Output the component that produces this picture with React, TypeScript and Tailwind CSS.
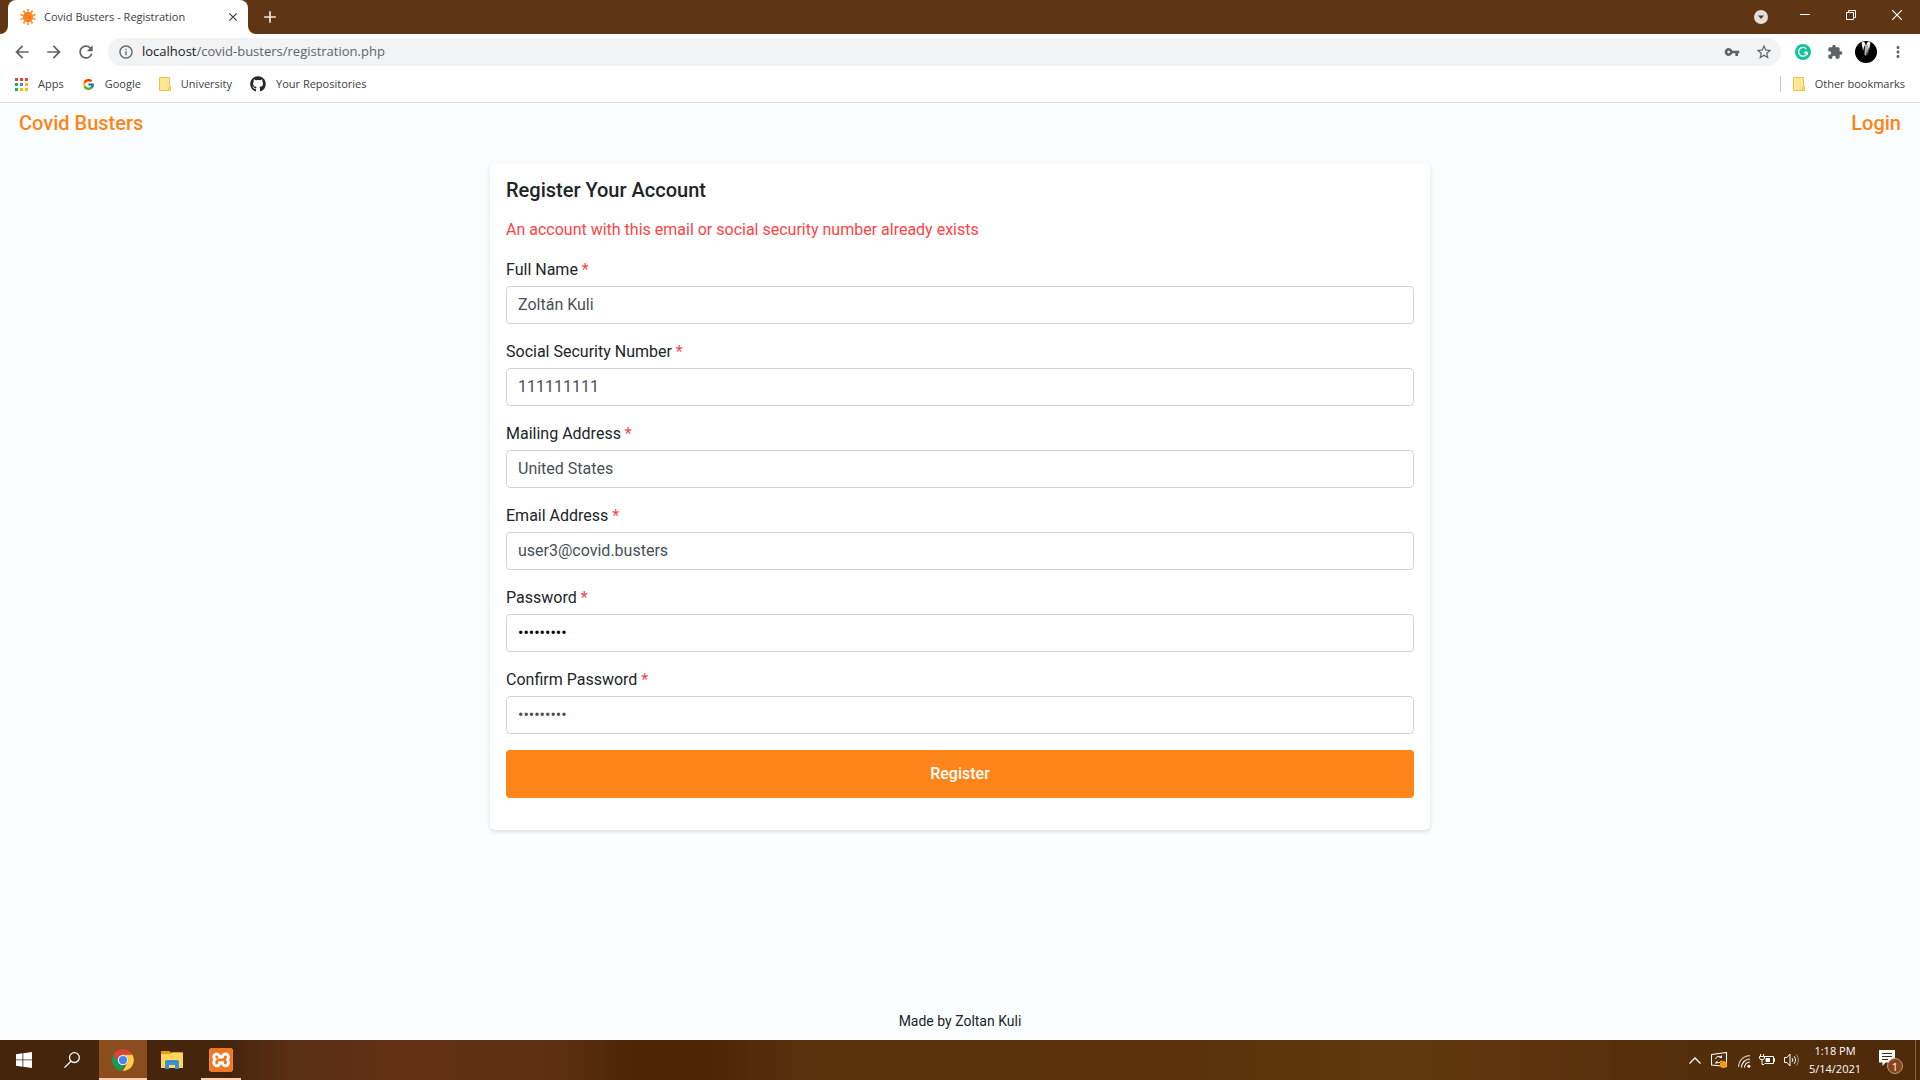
import type { ReactNode } from "react";
import {
  MdArrowBack,
  MdArrowForward,
  MdRefresh,
  MdInfoOutline,
  MdVpnKey,
  MdStarBorder,
  MdExtension,
  MdMoreVert,
  MdClose,
  MdAdd,
} from "react-icons/md";
import { FcGoogle } from "react-icons/fc";
import { FaGithub } from "react-icons/fa";
import { SiXampp } from "react-icons/si";

const SPIKES = [0, 36, 72, 108, 144, 180, 216, 252, 288, 324];

function VirusIcon() {
  return (
    <svg width="16" height="16" viewBox="0 0 16 16" aria-hidden="true">
      <circle cx="8" cy="8" r="5.2" fill="#ff841a" />
      {SPIKES.map((a) => (
        <g key={a} transform={`rotate(${a} 8 8)`} stroke="#f58220" strokeLinecap="round">
          <path d="M8 3V1" strokeWidth="1.1" />
          <path d="M7.4 0.8H8.6" strokeWidth="1.1" />
        </g>
      ))}
      <circle cx="6.3" cy="6.6" r="1" fill="#e8701a" />
      <circle cx="9.6" cy="8.8" r="1.2" fill="#e8701a" />
    </svg>
  );
}

function FolderIcon() {
  return (
    <svg width="12" height="14" viewBox="0 0 12 14" aria-hidden="true">
      <path d="M.5.5h10v9h1v4H.5z" fill="#ffe796" stroke="#e8c34b" />
      <path d="M9.5 13.5v-3l1-1" fill="none" stroke="#e8c34b" />
    </svg>
  );
}

function AppsIcon() {
  const colors = ["#ea4335", "#ea4335", "#ea4335", "#34a853", "#4285f4", "#fbbc05", "#34a853", "#fbbc05", "#fbbc05"];
  return (
    <svg width="13" height="13" viewBox="0 0 13 13" aria-hidden="true">
      {colors.map((c, i) => (
        <rect key={i} x={(i % 3) * 5} y={Math.floor(i / 3) * 5} width="3" height="3" fill={c} />
      ))}
    </svg>
  );
}

function GrammarlyIcon() {
  return (
    <svg width="16" height="16" viewBox="0 0 16 16" aria-hidden="true">
      <circle cx="8" cy="8" r="8" fill="#15c39a" />
      <path d="M11.3 4.9A4.4 4.4 0 1 0 12.3 8.8H9" fill="none" stroke="#fff" strokeWidth="1.3" />
      <path d="M10 7.2L12.3 8.8V11" fill="none" stroke="#fff" strokeWidth="1.2" />
    </svg>
  );
}

function AvatarIcon() {
  return (
    <svg width="22" height="22" viewBox="0 0 22 22" aria-hidden="true">
      <circle cx="11" cy="11" r="11" fill="#000" />
      <path d="M6.5 1.5L9 .6 10.5 3 9 6 8 10z" fill="#f4f4f4" />
      <path d="M15.5 1.5L13 .6 11.500 3 13 6 14 9z" fill="#f4f4f4" />
      <path d="M10 3.5h2l1.500 3.500-.5 7-1-5-.8 6-1.700-1.500z" fill="#b5b5b5" />
    </svg>
  );
}

function ChromeIcon() {
  return (
    <svg width="22" height="22" viewBox="0 0 48 48" aria-hidden="true">
      <path d="M3.2 12.5A24 24 0 0 1 44.8 12.5H24A11.5 11.5 0 0 0 14 18.3L14 30z" fill="#db4437" />
      <path d="M3.2 12.5L14 29.7A11.5 11.5 0 0 0 24 35.5L24 48A24 24 0 0 1 3.2 12.5z" fill="#0f9d58" />
      <path d="M44.8 12.5A24 24 0 0 1 23.5 48L34 29.7A11.5 11.5 0 0 0 24 12.5z" fill="#ffcd40" />
      <circle cx="24" cy="24" r="11.5" fill="#f1f1f1" />
      <circle cx="24" cy="24" r="9" fill="#4285f4" />
    </svg>
  );
}

function ExplorerIcon() {
  return (
    <svg width="22" height="18" viewBox="0 0 22 18" aria-hidden="true">
      <path d="M0 0h8.5l1.5 1.5H21V4H0z" fill="#e29e0b" />
      <path d="M0 3h9.5l1.5-1.5H22V17H0z" fill="#ffd75e" />
      <path d="M4 18v-7.5l1-1h12l1 1V18h-4v-4H8v4z" fill="#3a92d8" />
      <path d="M5 9.5h12l1 1H4z" fill="#2474b8" />
    </svg>
  );
}

function BookmarkLink({ icon, label }: { icon: ReactNode; label: string }) {
  return (
    <a href="#" className="flex items-center gap-2.5 whitespace-nowrap text-[11px] text-[#3c4043]">
      {icon}
      <span>{label}</span>
    </a>
  );
}

function BrowserBar() {
  return (
    <header className="bg-white font-['Open_Sans',sans-serif]">
      <div className="flex h-[34px] items-stretch bg-[#5f3514]">
        <div className="flex w-2 shrink-0 bg-white">
          <span className="flex-1 rounded-br-lg bg-[#5f3514]" />
        </div>
        <div className="flex w-[240px] shrink-0 items-center rounded-t-lg bg-white pr-2 pl-3">
          <VirusIcon />
          <span className="ml-2 flex-1 whitespace-nowrap text-[11px] text-[#3c4043]">Covid Busters - Registration</span>
          <button type="button" aria-label="Close tab" className="text-[#3c4043]">
            <MdClose size={14} />
          </button>
        </div>
        <div className="flex w-2 shrink-0 bg-white">
          <span className="flex-1 rounded-bl-lg bg-[#5f3514]" />
        </div>
        <button type="button" aria-label="New tab" className="ml-1 text-[#efe9e5]">
          <MdAdd size={20} />
        </button>
        <div className="ml-auto flex items-center pb-1 text-white">
          <button type="button" aria-label="Search tabs" className="mr-8">
            <svg width="14" height="14" viewBox="0 0 14 14" className="mt-1">
              <circle cx="7" cy="7" r="7" fill="#e3dedb" />
              <path d="M4 5.5h6L7 9z" fill="#5f3514" />
            </svg>
          </button>
          <button type="button" aria-label="Minimize" className="mr-9">
            <svg width="10" height="10" viewBox="0 0 10 10" fill="none" stroke="currentColor">
              <path d="M0 4.5H10" />
            </svg>
          </button>
          <button type="button" aria-label="Restore" className="mr-9">
            <svg width="10" height="10" viewBox="0 0 10 10" fill="none" stroke="currentColor">
              <path d="M.5 2.5h7v7h-7zM2.5 2.5v-2h7v7h-2" />
            </svg>
          </button>
          <button type="button" aria-label="Close" className="mr-[18px]">
            <svg width="10" height="10" viewBox="0 0 10 10" fill="none" stroke="currentColor">
              <path d="M0 0L10 10M10 0L0 10" strokeWidth="1.2" />
            </svg>
          </button>
        </div>
      </div>

      <div className="flex h-9 items-center text-[#5f6368]">
        <button type="button" aria-label="Back" className="ml-3">
          <MdArrowBack size={20} />
        </button>
        <button type="button" aria-label="Forward" className="ml-3">
          <MdArrowForward size={20} />
        </button>
        <button type="button" aria-label="Reload" className="ml-3">
          <MdRefresh size={20} />
        </button>
        <div className="ml-3 flex h-7 flex-1 items-center rounded-full bg-[#f1f3f4] pr-2 pl-2.5">
          <MdInfoOutline size={16} />
          <a href="#" className="ml-2 flex-1 text-[13px] whitespace-nowrap text-[#5f6368]">
            <span className="text-[#202124]">localhost</span>/covid-busters/registration.php
          </a>
          <button type="button" aria-label="Saved passwords">
            <MdVpnKey size={16} />
          </button>
          <button type="button" aria-label="Bookmark this page" className="ml-[15px]">
            <MdStarBorder size={18} />
          </button>
        </div>
        <button type="button" aria-label="Grammarly" className="ml-3.5">
          <GrammarlyIcon />
        </button>
        <button type="button" aria-label="Extensions" className="ml-4">
          <MdExtension size={16} />
        </button>
        <button type="button" aria-label="Profile" className="ml-3">
          <AvatarIcon />
        </button>
        <button type="button" aria-label="Menu" className="mr-[13px] ml-3">
          <MdMoreVert size={18} />
        </button>
      </div>

      <nav className="flex h-[33px] items-center border-b border-[#dadce0] px-[15px] pb-1">
        <div className="flex items-center gap-[18px]">
          <BookmarkLink icon={<AppsIcon />} label="Apps" />
          <BookmarkLink icon={<FcGoogle size={13} />} label="Google" />
          <BookmarkLink icon={<FolderIcon />} label="University" />
          <BookmarkLink icon={<FaGithub size={16} color="#24292e" />} label="Your Repositories" />
        </div>
        <div className="ml-auto flex items-center gap-3">
          <span className="h-4 w-px bg-[#c6c8cb]" />
          <BookmarkLink icon={<FolderIcon />} label="Other bookmarks" />
        </div>
      </nav>
    </header>
  );
}

type FieldProps = { id: string; label: string; value: string; type?: string; tone?: string };

function Field({ id, label, value, type = "text", tone = "text-[#495057]" }: FieldProps) {
  return (
    <div className="mb-4">
      <label htmlFor={id} className="mb-1 block leading-6">
        {label} <span className="text-[#ff4444]">*</span>
      </label>
      <input
        id={id}
        type={type}
        defaultValue={value}
        className={`block h-[38px] w-full rounded border border-[#ced4da] bg-white px-[11px] pb-0.5 outline-none ${tone}`}
      />
    </div>
  );
}

function RegistrationPage() {
  return (
    <div className="flex flex-1 flex-col bg-[#fafeff] font-[Roboto,sans-serif] text-base text-[#212529]">
      <nav className="flex items-center justify-between px-[19px] pt-1 text-xl leading-8 font-medium text-[#ff841a]">
        <a href="#">Covid Busters</a>
        <a href="#">Login</a>
      </nav>
      <main className="px-4 pt-6">
        <form className="mx-auto max-w-[940px] rounded-[5px] bg-white p-4 pb-8 shadow-[0_2px_4px_rgba(0,0,0,0.13)]">
          <h1 className="mb-4 text-xl leading-[23px] font-medium">Register Your Account</h1>
          <p className="mb-4 leading-6 text-[#ff4444]">
            An account with this email or social security number already exists
          </p>
          <Field id="name" label="Full Name" value="Zoltán Kuli" />
          <Field id="ssn" label="Social Security Number" value="111111111" />
          <Field id="address" label="Mailing Address" value="United States" />
          <Field id="email" label="Email Address" value="user3@covid.busters" />
          <Field id="password" label="Password" value="covid1234" type="password" tone="text-black" />
          <Field id="confirm" label="Confirm Password" value="covid1234" type="password" />
          <button type="button" className="block h-12 w-full rounded bg-[#ff841a] font-medium text-white">
            Register
          </button>
        </form>
      </main>
      <footer className="mt-auto pb-[7px] text-center text-sm leading-6">Made by Zoltan Kuli</footer>
    </div>
  );
}

function Taskbar() {
  return (
    <footer className="flex h-10 items-stretch bg-[linear-gradient(90deg,#45260d_0%,#45260d_12%,#5a2e14_15%,#613015_20%,#603015_28%,#4f2506_33%,#4f2506_37%,#5c320d_43%,#5b300b_60%,#61380f_73%,#5f320e_80%,#542f0a_86%,#4d2a0a_100%)] font-['Open_Sans',sans-serif] text-white">
      <button type="button" aria-label="Start" className="flex w-12 items-center justify-center">
        <svg width="16" height="16" viewBox="0 0 16 16" fill="currentColor">
          <path d="M0 2.2L6.5 1.3V7.5H0zM7.3 1.2L16 0V7.5H7.3zM0 8.3H6.5V14.7L0 13.8zM7.3 8.3H16V16L7.3 14.8z" />
        </svg>
      </button>
      <button type="button" aria-label="Search" className="flex w-[51px] items-center justify-center pr-[3px]">
        <svg width="16" height="16" viewBox="0 0 16 16" fill="none" stroke="currentColor" strokeWidth="1.3">
          <circle cx="10.4" cy="5.6" r="4.9" />
          <path d="M6.9 9.2L.5 15.6" />
        </svg>
      </button>
      <button
        type="button"
        aria-label="Chrome"
        className="flex w-12 items-center justify-center border-b-2 border-[#ffd0ae] bg-[#8a4d1d] pt-0.5"
      >
        <ChromeIcon />
      </button>
      <button type="button" aria-label="File Explorer" className="flex w-[50px] items-center justify-center">
        <ExplorerIcon />
      </button>
      <button
        type="button"
        aria-label="XAMPP"
        className="ml-1 flex w-10 items-center justify-center border-b-2 border-[#ffd0ae] pt-0.5"
      >
        <span className="rounded bg-white text-[#f37623]">
          <SiXampp size={24} />
        </span>
      </button>

      <div className="ml-auto flex items-center">
        <svg width="12" height="7" viewBox="0 0 12 7" fill="none" stroke="currentColor" strokeWidth="1.3" className="mr-2.5">
          <path d="M.5 6.5L6 1l5.5 5.5" />
        </svg>
        <svg width="17" height="16" viewBox="0 0 17 16" fill="none" stroke="currentColor" className="mr-2.5">
          <path d="M.5 2.5L15.5.5V14.5L.5 13z" strokeWidth="1.1" />
          <path d="M4.5 7A3.5 3.5 0 0 1 10.5 5.5V3.5M10.5 5.5H8.5M10.5 8.5A3.5 3.5 0 0 1 5 10V12M5 10H7" />
          <circle cx="12.5" cy="12.5" r="3.5" fill="#ff9a0c" stroke="none" />
        </svg>
        <svg width="13" height="13" viewBox="0 0 13 13" fill="none" stroke="currentColor" strokeWidth="1.1" className="mt-0.5 mr-2">
          <path d="M.6 12A11.4 11.4 0 0 1 12 .6" opacity=".75" />
          <path d="M3.5 12.5A8.5 8.5 0 0 1 12 4" />
          <path d="M6.5 12.5A5.5 5.5 0 0 1 12 7" />
          <circle cx="10.9" cy="11.3" r="1.5" fill="currentColor" stroke="none" />
        </svg>
        <svg width="17" height="12" viewBox="0 0 17 12" fill="none" stroke="currentColor" className="mr-2">
          <path d="M5 2.5h9.5v7H5.5M14.5 4.5h1v3h-1" />
          <path d="M7 4.5h3.5v3H7z" fill="currentColor" />
          <path d="M1.5 0v2.5M4.5 0v2.5M.5 2.5h5v2l-1.500 1H2l-1.500-1zM3 5.5v5h2" />
        </svg>
        <svg width="16" height="14" viewBox="0 0 16 14" fill="none" stroke="currentColor">
          <path d="M.5 4.5h2.5L6 1v12L3 9.5H.5z" />
          <path d="M8 5a3 3 0 0 1 0 4M10 3.2a6 6 0 0 1 0 7.6" />
          <path d="M12.3 1.5a9 9 0 0 1 0 11" opacity=".5" />
        </svg>
        <div className="ml-2 w-[54px] text-center text-[11px] leading-[18px] whitespace-nowrap">
          <div>1:18 PM</div>
          <div>5/14/2021</div>
        </div>
        <button type="button" aria-label="Notifications" className="relative mr-3 ml-[17px] h-6 w-6">
          <svg width="24" height="24" viewBox="0 0 24 24">
            <path d="M0 2h16v12.5H6.5L3.5 18v-3.5H0z" fill="#fff" />
            <path d="M3 5.5h10M3 8.5h10M3 11.5h6" stroke="#4d2a0a" />
          </svg>
          <span className="absolute right-0 -bottom-0.5 flex h-4 w-4 items-center justify-center rounded-full border border-[#c99877] bg-[#87451a] text-[11px] leading-none">
            1
          </span>
        </button>
        <span className="mr-1 h-10 w-px bg-[#806448]" />
      </div>
    </footer>
  );
}

export default function App() {
  return (
    <div className="flex min-h-screen flex-col">
      <BrowserBar />
      <RegistrationPage />
      <Taskbar />
    </div>
  );
}
